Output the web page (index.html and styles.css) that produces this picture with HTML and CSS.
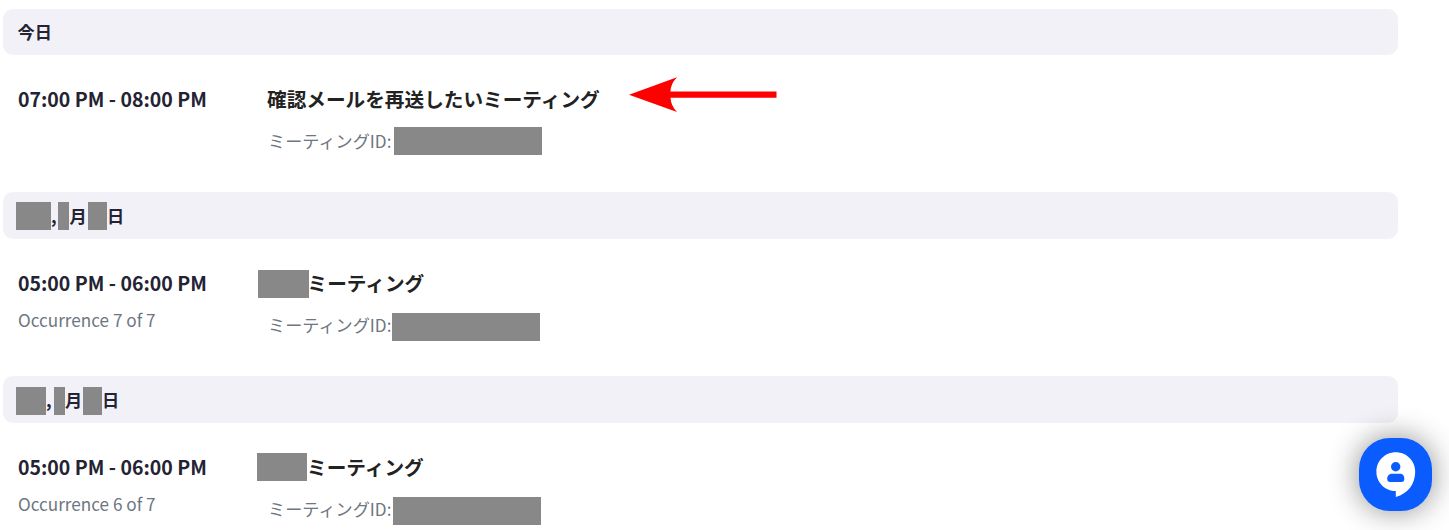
FILE: index.html
```html
<!DOCTYPE html>
<html lang="ja">
<head>
<meta charset="utf-8">
<title>ミーティング</title>
<link rel="stylesheet" href="styles.css">
</head>
<body>
<main class="list">
  <section class="day day-today">
    <h2 class="date"><span class="today">今日</span></h2>
    <div class="meeting">
      <div class="when"><div class="time">07:00 PM - 08:00 PM</div></div>
      <div class="info">
        <div class="title"><span>確認メールを再送したいミーティング</span>
          <svg class="arrow" width="148" height="36" viewBox="0 0 148 36"><path d="M0 17.700 48 .3Q41.500 7 41.500 14.500H147.500V20.800H41.500Q42 29 48 35Z" fill="#f00"/></svg>
        </div>
        <div class="meeting-id"><span>ミーティングID:</span><i class="mask mask-id"></i></div>
      </div>
    </div>
  </section>
  <section class="day day-second">
    <h2 class="date"><i class="mask mask-week"></i><span class="comma">,</span><i class="mask mask-month"></i><span class="month">月</span><i class="mask mask-date"></i><span class="sun">日</span></h2>
    <div class="meeting">
      <div class="when"><div class="time">05:00 PM - 06:00 PM</div><div class="occurrence">Occurrence 7 of 7</div></div>
      <div class="info">
        <div class="title"><i class="mask mask-name"></i><span>ミーティング</span></div>
        <div class="meeting-id"><span>ミーティングID:</span><i class="mask mask-id"></i></div>
      </div>
    </div>
  </section>
  <section class="day day-third">
    <h2 class="date"><i class="mask mask-week"></i><span class="comma">,</span><i class="mask mask-month"></i><span class="month">月</span><i class="mask mask-date"></i><span class="sun">日</span></h2>
    <div class="meeting">
      <div class="when"><div class="time">05:00 PM - 06:00 PM</div><div class="occurrence">Occurrence 6 of 7</div></div>
      <div class="info">
        <div class="title"><i class="mask mask-name"></i><span>ミーティング</span></div>
        <div class="meeting-id"><span>ミーティングID:</span><i class="mask mask-id"></i></div>
      </div>
    </div>
  </section>
</main>
<button class="chat" aria-label="Chat">
  <svg width="73" height="73" viewBox="0 0 73 73">
    <path d="M36.700 14.300C47.700 14.300 56.200 23 56.200 33.500C56.200 46 49 55.500 36.800 59V53C26 53 17.400 44.500 17.400 33.700S26 14.300 36.700 14.300Z" fill="#fff"/>
    <circle cx="36.700" cy="28.700" r="4.700" fill="#0b5cff"/>
    <path d="M33 35.800H41C44 35.800 45.300 38 45.300 41Q45.300 43.900 42.300 43.900H31.200Q28.200 43.900 28.200 41C28.200 38 30 35.800 33 35.800Z" fill="#0b5cff"/>
  </svg>
</button>
</body>
</html>
```
FILE: styles.css
```css
* { box-sizing: border-box; }
body {
  margin: 0;
  height: 530px;
  overflow: hidden;
  background: #fff;
  color: #232333;
  font-family: "Noto Sans CJK JP", sans-serif;
}
.list { width: 1398px; height: 530px; padding: 9px 0 0 3px; overflow: hidden; }
.day { height: 184px; }
.day-today { height: 183px; }
.date {
  display: flex;
  align-items: center;
  height: 47px;
  margin: 0;
  padding-left: 14px;
  border-radius: 10px;
  background: #f2f1f7;
  font-size: 17.200px;
  font-weight: 700;
  line-height: 26px;
}
.day-today .date { height: 46px; padding-left: 14.500px; }
.day-second .date, .day-third .date { padding-left: 13px; }
.day-third .date .mask { margin-top: 2px; }
.meeting { display: flex; padding: 29px 0 0 15px; }
.when { flex: 0 0 249px; }
.time { height: 30px; font-size: 19.500px; font-weight: 700; line-height: 30px; white-space: nowrap; }
.occurrence { margin-top: 8px; color: #6e7680; font-size: 17.150px; line-height: 27px; }
.title {
  display: flex;
  align-items: center;
  height: 30px;
  color: #222;
  font-size: 19.650px;
  font-weight: 700;
  line-height: 30px;
  white-space: nowrap;
}
.arrow { flex: none; margin: -9px 0 0 29px; }
.meeting-id {
  display: flex;
  height: 28px;
  margin: 13px 0 0 1px;
  color: #6e7680;
  font-size: 17.150px;
  line-height: 28px;
}
.meeting-id span { width: 124px; white-space: nowrap; }
.mask { flex: none; height: 28px; background: #888; }
.mask-id { width: 148px; margin-left: 2px; }
.mask-week { width: 35px; }
.mask-month { width: 11px; }
.mask-date { width: 19px; }
.comma { width: 7px; }
.month { width: 19px; padding-left: .5px; }
.day-third .mask-week { width: 30px; }
.day-third .comma { width: 8px; }
.day-third .month { width: 18px; padding-left: 0; }
.mask-name { width: 51px; margin: 1px -1.500px 0 -9px; }
.day-second .title .mask { margin-top: 2px; }
.day-third .mask-name { width: 50px; margin: 0 0 0 -10px; }
.day-second .mask-id { margin: 2px 0 -2px 0; }
.day-third .mask-id { margin: 2px 0 -2px 1px; }
.chat {
  position: absolute;
  left: 1359px;
  top: 438px;
  width: 73px;
  height: 73px;
  padding: 0;
  border: 0;
  border-radius: 31px;
  background: #0b5cff;
  box-shadow: 0 0 30px rgba(0, 0, 0, .45);
}
.chat svg { display: block; }
```
